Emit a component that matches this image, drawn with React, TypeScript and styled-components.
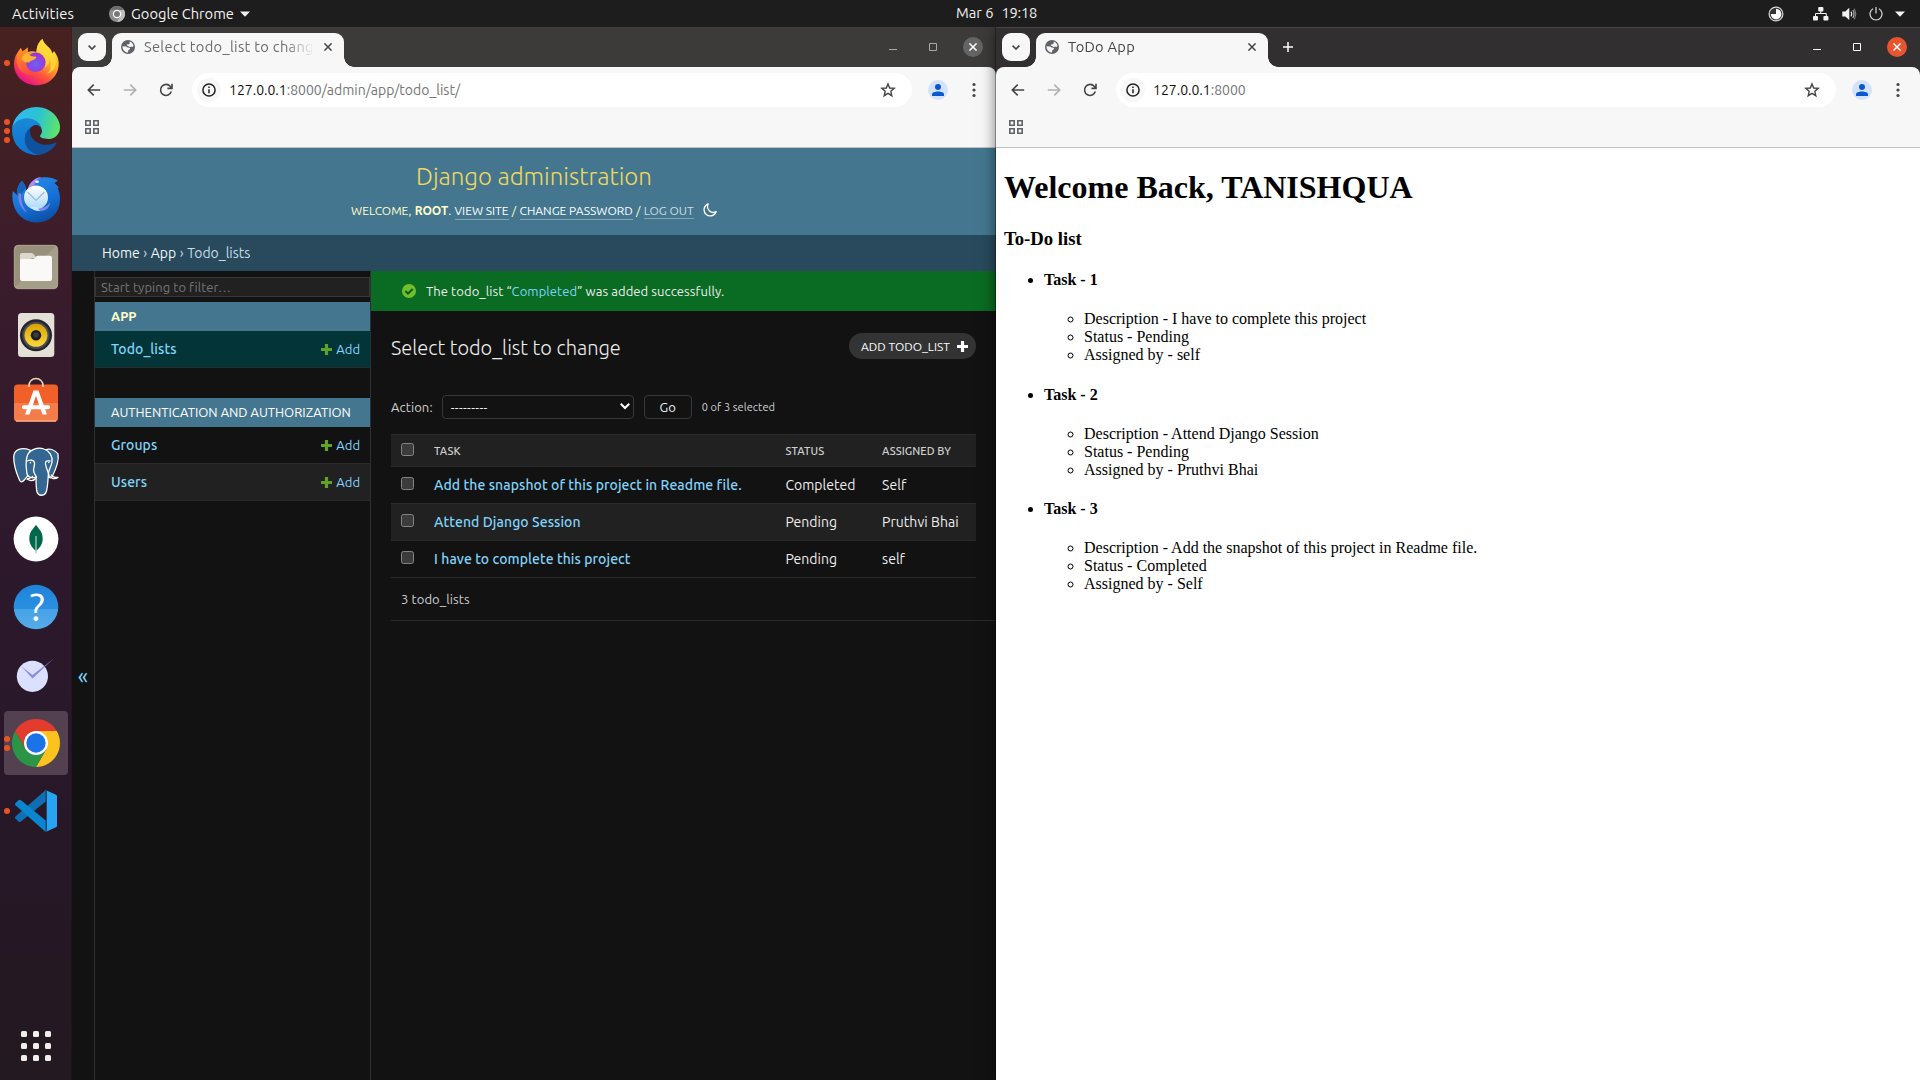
import React from 'react';
import styled, { createGlobalStyle, css } from 'styled-components';

const ui = '"Ubuntu", "Noto Sans", sans-serif';

const GlobalStyle = createGlobalStyle`
  *, *::before, *::after { box-sizing: border-box; }
  body { margin: 0; overflow: hidden; font-family: ${ui}; }
  svg { display: block; flex: none; }
`;

type Track = { $track?: number };
const tracking = css<Track>`
  letter-spacing: ${(p) => p.$track ?? 0}px;
  white-space: pre;
`;

/* ---------- desktop shell ---------- */

const Desktop = styled.div`
  display: grid;
  grid-template-rows: 27px 1053px;
  width: 1920px;
  height: 1080px;
  background: #121212;
`;

const TopBar = styled.header`
  display: grid;
  grid-template-columns: 956px 1fr auto;
  align-items: center;
  background: #1d1d1d;
  color: #f2f2f2;
  font-size: 14.67px;
  line-height: 26px;
`;

const TopLeft = styled.div`
  display: flex;
  align-items: center;
  padding-left: 12px;
`;

const TopText = styled.span<Track>`
  ${tracking}
`;

const AppMenu = styled.div`
  display: flex;
  align-items: center;
  gap: 6px;
  margin-left: 35px;
`;

const Clock = styled.div`
  display: flex;
  gap: 8px;
  padding-bottom: 1px;
`;

const Tray = styled.div`
  display: flex;
  align-items: center;
  justify-content: flex-end;
  padding-right: 15px;
`;

const TraySlot = styled.div<{ $gap: number }>`
  margin-left: ${(p) => p.$gap}px;
`;

const Workspace = styled.div`
  display: grid;
  grid-template-columns: 72px 924px 924px;
`;

const Dock = styled.nav`
  display: flex;
  flex-direction: column;
  align-items: center;
  gap: 4px;
  padding: 4px 0 3px;
  background: linear-gradient(180deg, #47211f 0%, #3a1c2c 24%, #2f192c 45%, #28172a 68%, #231920 100%);
  box-shadow: inset -1px 0 0 rgba(0, 0, 0, 0.12);
`;

const DockItem = styled.div<{ $active?: boolean }>`
  position: relative;
  display: flex;
  align-items: center;
  justify-content: center;
  width: 64px;
  height: 64px;
  border-radius: 4px;
  background: ${(p) => (p.$active ? '#53414f' : 'transparent')};
`;

const RunningDots = styled.div`
  position: absolute;
  left: 0;
  top: 0;
  bottom: 0;
  display: flex;
  flex-direction: column;
  justify-content: center;
  gap: 3px;
`;

const RunningDot = styled.i`
  width: 6px;
  height: 6px;
  border-radius: 50%;
  background: #e95420;
`;

const AppGridButton = styled.div`
  display: grid;
  grid-template-columns: repeat(3, 6px);
  gap: 6px;
  margin-top: auto;
  margin-bottom: 16px;
`;

const GridDot = styled.i`
  height: 6px;
  border-radius: 1.5px;
  background: #f0efeb;
`;

/* ---------- browser chrome ---------- */

const Window = styled.section<{ $front?: boolean }>`
  display: grid;
  grid-template-columns: 924px;
  grid-template-rows: 40px 46px 35px 932px;
  min-width: 0;
  background: ${(p) => (p.$front ? '#322f31' : '#3d3b39')};
  ${(p) =>
    p.$front &&
    css`
      z-index: 1;
      box-shadow: 0 0 0 1px rgba(0, 0, 0, 0.3), 0 2px 14px rgba(0, 0, 0, 0.55);
      clip-path: inset(0 0 0 -24px);
    `}
`;

const TabStrip = styled.div<{ $front?: boolean }>`
  display: flex;
  align-items: flex-start;
  padding: 6px 13px 0 6px;
  box-shadow: inset 0 1px 0 ${(p) => (p.$front ? '#474546' : '#403e3c')};
`;

const TabSearch = styled.div`
  display: flex;
  align-items: center;
  justify-content: center;
  width: 28px;
  height: 28px;
  border-radius: 9px;
  background: #f7f7f7;
`;

const Tab = styled.div`
  position: relative;
  display: flex;
  align-items: center;
  width: 232px;
  height: 34px;
  margin-left: 6px;
  padding: 0 12px 6px 9px;
  border-radius: 9px 9px 0 0;
  background: #f7f7f7;
  &::before,
  &::after {
    content: '';
    position: absolute;
    bottom: 0;
    width: 10px;
    height: 10px;
  }
  &::before {
    right: 100%;
    background: radial-gradient(circle at 0 0, transparent 9.5px, #f7f7f7 10px);
  }
  &::after {
    left: 100%;
    background: radial-gradient(circle at 100% 0, transparent 9.5px, #f7f7f7 10px);
  }
`;

const TabTitle = styled.span<Track & { $muted?: boolean }>`
  ${tracking}
  flex: none;
  width: 168px;
  margin: 0 12px 0 9px;
  overflow: hidden;
  font-size: 14.67px;
  line-height: 22px;
  color: ${(p) => (p.$muted ? '#6c6c6c' : '#454545')};
  mask-image: linear-gradient(90deg, #000 84%, transparent 101%);
`;

const NewTab = styled.div`
  margin: 9px 0 0 15px;
`;

const WindowControls = styled.div<{ $front?: boolean }>`
  display: flex;
  align-items: center;
  gap: 20px;
  height: 28px;
  margin-left: auto;
  color: ${(p) => (p.$front ? '#fff' : '#a9a8a7')};
`;

const CloseButton = styled.div<{ $front?: boolean }>`
  display: flex;
  align-items: center;
  justify-content: center;
  width: 20px;
  height: 20px;
  border-radius: 50%;
  background: ${(p) => (p.$front ? '#e95430' : '#656464')};
`;

const Toolbar = styled.div`
  display: flex;
  align-items: center;
  padding: 0 15px;
  border-radius: 8px 8px 0 0;
  background: #f7f7f7;
`;

const NavIcons = styled.div`
  display: flex;
  gap: 22px;
  margin-right: 19px;
`;

const Omnibox = styled.div`
  display: flex;
  align-items: center;
  flex: none;
  width: 720px;
  height: 34px;
  padding: 0 16px 0 5px;
  border-radius: 17px;
  background: #fff;
  font-size: 14px;
`;

const InfoBadge = styled.div`
  display: flex;
  align-items: center;
  justify-content: center;
  width: 24px;
  height: 24px;
  margin-right: 8px;
  border-radius: 50%;
  background: #f7f7f7;
`;

const Host = styled.span`
  color: #111;
`;

const Path = styled.span`
  flex: 1;
  color: #757575;
`;

const Profile = styled.div`
  display: flex;
  align-items: center;
  justify-content: center;
  width: 20px;
  height: 20px;
  margin: 0 24px 0 16px;
  border-radius: 50%;
  background: #d3e3fd;
`;

const BookmarkBar = styled.div`
  padding: 7px 13px 0;
  border-bottom: 1px solid #c2c2c2;
  background: #f7f7f7;
`;

/* ---------- django admin ---------- */

const AdminPage = styled.div`
  display: grid;
  grid-template-rows: 87px 36px 1fr;
  background: #121212;
  color: #eee;
`;

const AdminHeader = styled.header`
  display: flex;
  flex-direction: column;
  align-items: center;
  padding-top: 16px;
  background: #44778f;
  color: #ffffcc;
`;

const SiteName = styled.h1`
  margin: 0;
  color: #f0d95d;
  font-size: 24px;
  font-weight: 300;
  line-height: 26px;
`;

const UserTools = styled.div`
  display: flex;
  align-items: center;
  gap: 3.3px;
  margin-top: 10px;
  font-size: 12px;
  line-height: 15px;
  height: 20px;
  text-transform: uppercase;
  svg { margin-left: 6px; }
`;

const ToolLink = styled.a<{ $soft?: boolean }>`
  align-self: flex-start;
  margin-top: 2.5px;
  padding-bottom: ${(p) => (p.$soft ? 0 : 1)}px;
  border-bottom: 1px solid #83a5b5;
  color: ${(p) => (p.$soft ? '#cfdde4' : '#fff')};
`;

const Breadcrumbs = styled.div`
  display: flex;
  align-items: center;
  gap: 3.5px;
  padding: 0 30px 1px;
  background: #284a5c;
  color: #c4dce8;
  font-size: 14px;
`;

const Crumb = styled.span<{ $link?: boolean }>`
  color: ${(p) => (p.$link ? '#f4f4f4' : '#c4dce8')};
`;

const AdminBody = styled.div`
  display: grid;
  grid-template-columns: 23px 276px 625px;
`;

const NavToggle = styled.button`
  display: flex;
  align-items: center;
  justify-content: center;
  padding: 0;
  border: 0;
  border-right: 1px solid #2f2f2f;
  background: transparent;
  color: #81d4fa;
  font: 22px/1 ${ui};
`;

const AdminNav = styled.nav`
  padding-top: 6px;
  border-right: 1px solid #2f2f2f;
`;

const Filter = styled.input`
  display: block;
  width: 100%;
  height: 20px;
  margin: 0 0 5px;
  padding: 0 5px;
  border: 1px solid #383838;
  background: #212121;
  font: 13px ${ui};
  letter-spacing: 0.05px;
  &::placeholder { color: #757575; opacity: 1; }
`;

const Module = styled.section`
  margin-bottom: 30px;
`;

const ModuleTitle = styled.h2<{ $current?: boolean }>`
  margin: 0;
  padding-left: 16px;
  background: #44778f;
  color: ${(p) => (p.$current ? '#ffffcc' : '#fff')};
  font-size: 13px;
  font-weight: ${(p) => (p.$current ? 700 : 400)};
  line-height: 29px;
  text-transform: uppercase;
`;

const ModelRow = styled.div<{ $tone?: 'current' | 'alt' }>`
  display: flex;
  align-items: center;
  height: 37px;
  padding: 0 10px 0 16px;
  border-bottom: 1px solid #2b2b2b;
  background: ${(p) => (p.$tone === 'current' ? '#033538' : p.$tone === 'alt' ? '#212121' : 'transparent')};
  color: #81d4fa;
`;

const ModelName = styled.a`
  flex: 1;
  font-size: 14px;
  font-weight: 500;
  letter-spacing: 0.07px;
`;

const AddLink = styled.a`
  display: flex;
  align-items: center;
  gap: 4px;
  font-size: 13px;
`;

const Main = styled.main`
  display: flex;
  flex-direction: column;
`;

const Message = styled.div`
  display: flex;
  align-items: center;
  gap: 10px;
  height: 40px;
  padding-left: 31px;
  background: #0a6b22;
  font-size: 13px;
  letter-spacing: 0.08px;
`;

const MessageLink = styled.a`
  color: #81d4fa;
`;

const Content = styled.div`
  padding: 20px 0 0 20px;
`;

const TitleRow = styled.div`
  display: flex;
  justify-content: space-between;
  height: 34px;
  margin-right: 20px;
`;

const PageTitle = styled.h2`
  margin: 0;
  font-size: 20px;
  font-weight: 300;
  line-height: 34px;
`;

const AddButton = styled.a`
  display: flex;
  align-items: center;
  gap: 7px;
  height: 26px;
  margin-top: 2px;
  padding: 0 8px 0 12px;
  border-radius: 13px;
  background: #333;
  color: #fff;
  font-size: 12px;
`;

const Actions = styled.div`
  display: flex;
  align-items: center;
  height: 24px;
  margin: 30px 0 15px;
  font-size: 13px;
  color: #d0d0d0;
  letter-spacing: 0.1px;
`;

const Select = styled.div`
  display: flex;
  align-items: center;
  justify-content: space-between;
  width: 192px;
  height: 24px;
  margin: 0 10px 0 9px;
  padding: 0 3px 1px 8px;
  border: 1px solid #383838;
  border-radius: 4px;
  color: #eee;
  letter-spacing: 0.35px;
`;

const GoButton = styled.button`
  width: 48px;
  height: 24px;
  margin-right: 10px;
  padding: 0;
  border: 1px solid #383838;
  border-radius: 4px;
  background: transparent;
  color: #eee;
  font: 13px ${ui};
`;

const Counter = styled.span`
  font-size: 11px;
  letter-spacing: 0.07px;
`;

const gridRow = css`
  display: grid;
  grid-template-columns: 43px 351.5px 96.5px 1fr;
  margin-right: 20px;
  border-bottom: 1px solid #2b2b2b;
`;

const HeadRow = styled.div`
  ${gridRow}
  height: 33px;
  border-top: 1px solid #2b2b2b;
  background: #212121;
  color: #d0d0d0;
  font-size: 11px;
  font-weight: 500;
  line-height: 32px;
`;

const BodyRow = styled.div<{ $alt?: boolean }>`
  ${gridRow}
  height: 37px;
  background: ${(p) => (p.$alt ? '#212121' : 'transparent')};
  font-size: 14px;
  line-height: 37px;
`;

const Cell = styled.span<Track>`
  ${tracking}
`;

const TaskLink = styled.a`
  color: #81d4fa;
  font-weight: 500;
  letter-spacing: 0.07px;
`;

const Checkbox = styled.i<{ $top: number }>`
  width: 13px;
  height: 13px;
  margin: ${(p) => p.$top}px 0 0 10px;
  border: 1px solid #858585;
  border-radius: 2.5px;
  background: #3b3b3b;
`;

const Paginator = styled.div`
  height: 43px;
  padding-left: 10px;
  border-bottom: 1px solid #2b2b2b;
  color: #d0d0d0;
  font-size: 13px;
  line-height: 43px;
  letter-spacing: 0.1px;
`;

/* ---------- todo page ---------- */

const TodoPage = styled.div`
  display: flow-root;
  padding: 0 8px;
  background: #fff;
  color: #000;
  font: 16px "Liberation Serif", "Times New Roman", serif;
`;

/* ---------- icons ---------- */

const Caret = () => (
  <svg width="10" height="6" viewBox="0 0 10 6"><path d="M0 .5h10L5 5.7z" fill="#f2f2f2" /></svg>
);

const GreyChrome = () => (
  <svg width="16" height="16" viewBox="0 0 16 16">
    <circle cx="8" cy="8" r="8" fill="#8c8c8c" />
    <path d="M1 4A8 8 0 0 1 15 4H8z" fill="#6d6d6d" />
    <path d="M15 4A8 8 0 0 1 8 16l3.5-6L11 4z" fill="#bdbdbd" />
    <circle cx="8" cy="8" r="3.6" fill="#777" stroke="#fff" strokeWidth="1.3" />
  </svg>
);

const IndicatorIcon = () => (
  <svg width="16" height="16" viewBox="0 0 16 16">
    <circle cx="8" cy="8" r="6.9" fill="#333" stroke="#d8d8d8" strokeWidth="1.2" />
    <path d="M8 8V2.8A5.3 5.3 0 1 1 2.8 8z" fill="#fff" />
  </svg>
);

const NetworkIcon = () => (
  <svg width="16" height="14" viewBox="0 0 16 14" fill="#f2f2f2">
    <rect x="5.2" y="0" width="5.2" height="4.4" rx="1" /><rect x="0" y="9" width="5" height="4.4" rx="1" />
    <rect x="10.4" y="9" width="5" height="4.4" rx="1" />
    <path d="M2.5 9.5v-3h10.8v3M7.8 4v2.5" fill="none" stroke="#f2f2f2" />
  </svg>
);

const VolumeIcon = () => (
  <svg width="15" height="14" viewBox="0 0 15 14">
    <path d="M.3 4.5h3L7.3.7v12.4L3.3 9.5h-3z" fill="#f2f2f2" />
    <path d="M9 4.6q1.6 2.4 0 4.8" fill="none" stroke="#f2f2f2" strokeWidth="1.2" />
    <path d="M10.8 3q2.5 4 0 8" fill="none" stroke="#c0c0c0" strokeWidth="1.1" />
    <path d="M12.4 1.6q3 5.4 0 10.8" fill="none" stroke="#8a8a8a" />
  </svg>
);

const PowerIcon = () => (
  <svg width="14" height="14" viewBox="0 0 14 14" fill="none" stroke="#dcdcdc" strokeWidth="1.2">
    <path d="M4 1.8a6 6 0 1 0 6 0M7 0v6.5" />
  </svg>
);

const Chevron = ({ color = '#444', w = 8 }: { color?: string; w?: number }) => (
  <svg width={w} height={w * 0.625} viewBox="0 0 8 5" fill="none" stroke={color} strokeWidth="1.6"><path d="M.6.6 4 4 7.4.6" /></svg>
);

const Globe = () => (
  <svg width="14" height="14" viewBox="0 0 14 14">
    <circle cx="7" cy="7" r="7" fill="#5f6368" />
    <path d="M8.9 1.5c1.9.7 3.4 2.5 3.6 4.5l-1.2.9c-.8-.1-1.2-.6-1.6-.2-.6.6-1.8.2-2.2-.4L6 5.6c-.6-.6 0-1.4.8-1.4h1.3c.8-.2.2-1.4.8-2.7M1.5 6.2 5 6.4c1 .2 1.2 1 1.9 1.2l1.6.1c.8.4.7 1.5-.1 1.8l-1 .4-.4 2.6c-3 0-5.4-2.4-5.5-6.3" fill="#f7f7f7" />
  </svg>
);

const Cross = ({ size, color, width = 1.5 }: { size: number; color: string; width?: number }) => (
  <svg width={size} height={size} viewBox="0 0 8 8" stroke={color} strokeWidth={width}><path d="M.4.4l7.2 7.2M7.6.4.4 7.6" /></svg>
);

const Arrow = ({ color, flip }: { color: string; flip?: boolean }) => (
  <svg width="14" height="14" viewBox="0 0 14 14" fill="none" stroke={color} strokeWidth="1.6">
    <path d={flip ? 'M.8 7h11.4M7.3 1.6 12.7 7l-5.4 5.4' : 'M13.2 7H1.8M6.7 1.6 1.3 7l5.4 5.4'} />
  </svg>
);

const Reload = () => (
  <svg width="14" height="14" viewBox="0 0 14 14" fill="none" stroke="#444" strokeWidth="1.6">
    <path d="M12.3 8.6A5.5 5.5 0 1 1 11.2 3.3L12.8 5M13 .8v4.6H8.4" />
  </svg>
);

const Info = () => (
  <svg width="14" height="14" viewBox="0 0 14 14">
    <circle cx="7" cy="7" r="6.1" fill="none" stroke="#222" strokeWidth="1.5" />
    <path d="M7 6.2v4.1M7 3.5v1.5" stroke="#222" strokeWidth="1.5" />
  </svg>
);

const Star = () => (
  <svg width="16" height="16" viewBox="0 0 16 16" fill="none" stroke="#444" strokeWidth="1.4">
    <path d="m8 1.9 1.7 4.1 4.5.4-3.4 2.9 1 4.4L8 11.4l-3.8 2.3 1-4.4L1.8 6.4l4.5-.4z" />
  </svg>
);

const Person = () => (
  <svg width="12" height="12" viewBox="0 0 12 12" fill="#0b57d0"><circle cx="6" cy="3" r="3" /><path d="M0 12v-1.5C0 8.5 3 7.6 6 7.6s6 .9 6 2.9V12z" /></svg>
);

const Kebab = () => (
  <svg width="4" height="16" viewBox="0 0 4 16" fill="#444"><circle cx="2" cy="2.5" r="1.6" /><circle cx="2" cy="8" r="1.6" /><circle cx="2" cy="13.5" r="1.6" /></svg>
);

const AppsGrid = () => (
  <svg width="14" height="14" viewBox="0 0 14 14" fill="none" stroke="#5f6368" strokeWidth="1.6">
    <path d="M.8.8h4.4v4.4H.8zM8.8.8h4.4v4.4H8.8zM.8 8.8h4.4v4.4H.8zM8.8 8.8h4.4v4.4H8.8z" />
  </svg>
);

const Moon = () => (
  <svg width="14" height="14" viewBox="0 0 14 14" fill="none" stroke="#fff" strokeWidth="1.3">
    <path d="M5.2.9A6.2 6.2 0 1 0 13.2 8.6 5.8 5.8 0 0 1 5.2.9z" strokeLinejoin="round" />
  </svg>
);

const Plus = ({ color, size = 11 }: { color: string; size?: number }) => (
  <svg width={size} height={size} viewBox="0 0 11 11" fill={color}><path d="M3.9 0h3.2v3.9H11v3.2H7.1V11H3.9V7.1H0V3.9h3.9z" /></svg>
);

const Tick = () => (
  <svg width="14" height="14" viewBox="0 0 14 14"><circle cx="7" cy="7" r="7" fill="#70bf2b" /><path d="m3.3 7 2.7 2.7L10.7 5" fill="none" stroke="#0a5a20" strokeWidth="2" /></svg>
);

const ArtFrame = styled.svg`
  width: 48px;
  height: 48px;
  overflow: visible;
`;

const Art = ({ box = 48, children, ...rest }: { box?: number } & React.SVGProps<SVGSVGElement>) => (
  <ArtFrame viewBox={`0 0 ${box} ${box}`} {...(rest as object)}>{children}</ArtFrame>
);

const Firefox = () => (
  <Art>
    <defs>
      <linearGradient id="ffBody" x1=".8" y1=".1" x2=".25" y2=".95">
        <stop offset="0" stopColor="#ffe83c" /><stop offset=".38" stopColor="#ffa72b" /><stop offset=".68" stopColor="#ff5239" /><stop offset="1" stopColor="#e6128a" />
      </linearGradient>
      <radialGradient id="ffGlobe" cx=".5" cy=".6" r=".6"><stop offset="0" stopColor="#6d62f5" /><stop offset="1" stopColor="#a02fd6" /></radialGradient>
      <linearGradient id="ffFace" x1="0" y1="0" x2=".5" y2="1"><stop offset="0" stopColor="#ff9a1c" /><stop offset=".5" stopColor="#ff7a2c" /><stop offset="1" stopColor="#ff4a45" /></linearGradient>
    </defs>
    <path d="M30.5 0c1 4 4 6 6.5 8.5 2 2 3 4 3.5 6l1.5-2.5c3 4 4.7 8 4.7 12.5C46.7 37 37 46.3 24.5 46.3S2 37 2 25c0-4.5 1.3-8.500 3.500-11.500L8.800 9l1.700 3.500 5.500-4-.3 4.500C18 12.300 22 12 24.500 13c0-5 2-10.500 6-13z" fill="url(#ffBody)" />
    <path d="M24.5 13c5 .5 9.5 5 9.5 10 0 2-.5 4-1.5 5.500 3-1 6-5 4-9.500 3.500 5 3 12-1.500 16 6-2 9-7 9-12 0-7-5.500-10.500-10-16C32 4 31 2 30.500 0c-4 2.500-6 8-6 13z" fill="#ffdc3a" opacity=".75" />
    <path d="M8.8 9l1.7 3.5 5.5-4-.3 4.5L17 30c1.500 3 4 4.500 8 4.500-8 4-18 0-20-10-1-6 .5-11 3.800-15.500z" fill="url(#ffFace)" opacity=".8" />
    <circle cx="23.7" cy="23.3" r="9.7" fill="url(#ffGlobe)" />
    <path d="M15.500 13c1.500 3.500 4 4.800 7.500 4.500 1 0 1.500.7 1 1.500-2 2.500-5 2-7 4.500-2 .5-6-.5-7.500-3.500 1-3 3-5.500 6-7z" fill="#ffb22e" />
  </Art>
);

const Edge = () => (
  <Art box={256}>
    <defs>
      <linearGradient id="edTop" x1="0" y1=".4" x2="1" y2=".6"><stop offset="0" stopColor="#35b8f1" /><stop offset=".5" stopColor="#2bc3d2" /><stop offset="1" stopColor="#5fe665" /></linearGradient>
      <linearGradient id="edLeft" x1=".4" y1="0" x2=".4" y2="1"><stop offset="0" stopColor="#1b8ad8" /><stop offset="1" stopColor="#0d74d1" /></linearGradient>
    </defs>
    <g transform="translate(-4.6 -4.9)">
      <path d="M235.68 195.46a93.73 93.73 0 0 1-10.54 4.71 101.87 101.87 0 0 1-35.9 6.46c-47.32 0-88.54-32.55-88.54-74.32A31.48 31.48 0 0 1 117.13 105c-42.8 1.8-53.8 46.4-53.8 72.53 0 73.88 68.09 81.37 82.76 81.37 7.91 0 19.84-2.3 27-4.56l1.31-.44a128.34 128.34 0 0 0 66.6-52.8 4 4 0 0 0-5.32-5.64z" fill="#0f519c" />
      <path d="M110.34 246.34A79.2 79.2 0 0 1 87.6 225a80.72 80.72 0 0 1 29.53-120c3.12-1.47 8.45-4.13 15.54-4a32.35 32.35 0 0 1 25.69 13 31.88 31.88 0 0 1 6.36 18.66c0-.21 24.46-79.6-80-79.6-43.9 0-80 41.66-80 78.21a130.15 130.15 0 0 0 12.11 56 128 128 0 0 0 156.38 67.11 75.55 75.55 0 0 1-62.78-8z" fill="url(#edLeft)" />
    </g>
    <path d="M152.33 148.86c-.81 1.05-3.3 2.5-3.3 5.66 0 2.61 1.7 5.12 4.72 7.23 14.38 10 41.49 8.68 41.56 8.68a59.56 59.56 0 0 0 30.27-8.35 61.38 61.38 0 0 0 30.43-52.88c.26-22.41-8-37.31-11.34-43.91C223.45 23.61 177.72 0 128 0A128 128 0 0 0 0 126.2c.48-36.54 36.8-66.05 80-66.05 3.5 0 23.46.34 42 10.07 16.34 8.58 24.9 18.94 30.85 29.21 6.18 10.67 7.28 24.15 7.28 29.52s-2.74 13.33-7.8 19.91z" fill="url(#edTop)" />
  </Art>
);

const Thunderbird = () => (
  <Art>
    <defs>
      <linearGradient id="tb" x1=".2" y1="0" x2=".6" y2="1"><stop offset="0" stopColor="#2a8be8" /><stop offset=".6" stopColor="#1470d6" /><stop offset="1" stopColor="#0c4fa5" /></linearGradient>
      <linearGradient id="tbMail" x1="0" y1="0" x2="0" y2="1"><stop offset="0" stopColor="#fff" /><stop offset="1" stopColor="#a9d9fb" /></linearGradient>
    </defs>
    <path d="M10 6C6.5 9 4.5 14 5 20L.8 16C-2 33 9 47.5 24 47.5S48 37 48 24c0-4-.7-8-2.5-11l1.5-.5-4.5-4.5 3.5-2.5C40 2 31 1 25 4c-4 2-7 5.5-9 9l-2 5C15 12 12.5 9 10 6z" fill="url(#tb)" />
    <path d="M16 13c2-6 7-10.5 14-11-5 2-7 5-7.5 8z" fill="#b48bf2" />
    <path d="M10 6C6.5 9 4.5 14 5 20l4 7c0-6 1-10 5-14-1-3-2.5-5.5-4-7z" fill="#1364bd" />
    <path d="M6.5 18c-1 8 2 16 9 20-5-6-7-12-6-19z" fill="#7f83e8" />
    <circle cx="24" cy="22.5" r="12" fill="url(#tbMail)" />
    <path d="M18 32c2 2.5 6 4.5 11 4-2-1-3-2-3-4z" fill="#c9e7fd" />
    <path d="m15.5 17 8.5 8.5L32.5 17" fill="none" stroke="#9fb9d6" strokeWidth="1.2" />
    <path d="M26 34c6-1 10-3 12-7 0 5-4 9-9 9z" fill="#8288ea" />
    <ellipse cx="25" cy="6.8" rx="2" ry="1.2" fill="#dff1ff" />
  </Art>
);

const Files = () => (
  <Art>
    <defs><linearGradient id="fl" x1="0" y1="0" x2="1" y2="1"><stop offset=".48" stopColor="#98907b" /><stop offset=".5" stopColor="#a59e89" /></linearGradient></defs>
    <rect x="2.3" y="2.3" width="43.4" height="43.4" rx="4" fill="url(#fl)" stroke="#bdb7a4" strokeWidth=".8" />
    <path d="M8 12q0-2 2-2h9.5q1.5 0 2.5 1.5l2 3L8 18z" fill="#dcd8cc" />
    <path d="M8 17.5q0-1.5 1.5-1.5h11q1 0 2-1l1.5-1.500q.7-.7 2-.7H38q2 0 2 2V36q0 2-2 2H10q-2 0-2-2z" fill="#faf9f7" />
  </Art>
);

const Rhythmbox = () => (
  <Art>
    <defs><linearGradient id="rb" x1="0" y1="0" x2="0" y2="1"><stop offset="0" stopColor="#d9a400" /><stop offset="1" stopColor="#fbd83e" /></linearGradient></defs>
    <rect x="6" y="2" width="36.3" height="44" rx="3.5" fill="#e3e0d5" />
    <circle cx="24" cy="24.3" r="16" fill="#25242c" />
    <circle cx="24" cy="24.3" r="13.6" fill="#484a55" />
    <circle cx="24" cy="24.3" r="11.5" fill="url(#rb)" />
    <circle cx="24" cy="24.3" r="5.2" fill="#1d1d1d" />
    <circle cx="24" cy="24" r="2.8" fill="#3b3b3b" />
  </Art>
);

const Software = () => (
  <Art>
    <defs><linearGradient id="sw" x1="0" y1="0" x2="0" y2="1"><stop offset=".5" stopColor="#f2602a" /><stop offset=".5" stopColor="#f47b4a" /></linearGradient></defs>
    <rect x="2" y="5.5" width="44" height="37" rx="3.5" fill="url(#sw)" />
    <path d="M4 42h40" stroke="#f9a882" strokeWidth="1.4" />
    <path d="M17 8V6.5a7 7 0 0 1 14 0V8" fill="none" stroke="#ecd9b0" strokeWidth="1.5" />
    <path d="M21.5 11.5h5L35 35.5h-4.5L24 17l-6.5 18.5H13z" fill="#fff" />
    <rect x="10" y="26.3" width="28" height="4" rx="2" fill="#fff" />
  </Art>
);

const Postgres = () => (
  <Art fill="#336791" stroke="#fff" strokeWidth="1.3" strokeLinejoin="round" strokeLinecap="round">
    <path d="M33 3c5-2 10 0 13 4 1 5-2 15-6 23-2 2-4 0-5-2z" />
    <path d="M18 3C10 0 2 2 1.7 10c0 7 3 17 6 23.5 1.5 2.5 3.5 1 5-1l5-6z" />
    <path d="M16 7c3-5 10-7 16-5 5 1.5 9 7 8 13-.5 4-3 7-3.5 11-.5 5-.5 12-2 18-1.5 5.5-8 5.5-9.5 1-1-4-1-10-1-15-4 2-8 0-9-3-.5-5-2.5-13 1-20z" />
    <path d="M15 14c3-1.5 7-1 7.5 1.5.5 4-2 5.5-.5 10 .7 2 2 3 2.5 5-3 4-6 4-9.5 1.5 3-1 5-1 5.5-2.5M38 14c-3-.5-5 0-4.5 3 .5 4 2.5 7 3.5 11.5 2 3.5 6 4 9 2-4 0-6-1-6.5-2.5" fill="none" />
    <circle cx="18.5" cy="15.8" r=".8" fill="#fff" stroke="none" /><circle cx="36.8" cy="15.5" r=".7" fill="#fff" stroke="none" />
  </Art>
);

const Mongo = () => (
  <Art>
    <circle cx="24" cy="24" r="22.4" fill="#fff" />
    <path d="M24 9.5c1 3 6.7 6 6.7 14 0 7-4 10-6.7 12.5-2.7-2.5-6.7-5.5-6.7-12.5 0-8 5.7-11 6.7-14z" fill="#00684a" />
    <path d="M24 21v17.5" stroke="#a9c9bc" strokeWidth="1.3" />
  </Art>
);

const HelpMark = styled.text`
  fill: #fff;
  font: 400 39px ${ui};
  text-anchor: middle;
`;

const Help = () => (
  <Art>
    <defs><linearGradient id="hp" x1="0" y1="0" x2="0" y2="1"><stop offset="0" stopColor="#1c84da" /><stop offset=".54" stopColor="#2b8fdf" /><stop offset=".54" stopColor="#45a2e6" /><stop offset="1" stopColor="#55ace9" /></linearGradient></defs>
    <circle cx="24" cy="24" r="22.3" fill="url(#hp)" />
    <HelpMark x="25" y="37.5">?</HelpMark>
  </Art>
);

const TodoClock = () => (
  <Art>
    <circle cx="20.4" cy="25.3" r="15.6" fill="#dce0ff" />
    <path d="M9.5 15.5 20.5 24 42.5 7 20.5 27.5z" fill="#6f7bdc" opacity=".8" />
  </Art>
);

const Chrome = () => (
  <Art>
    <path d="M24 24 3.22 12A24 24 0 0 1 44.78 12z" fill="#e33b2e" />
    <path d="M24 24V12h20.78A24 24 0 0 1 24 48l10.4-18z" fill="#fcc31e" />
    <path d="M24 24l10.4 6L24 48A24 24 0 0 1 3.22 12l10.4 18z" fill="#2a9547" />
    <path d="M3.22 12 13.6 30 24 24V12z" fill="#e33b2e" />
    <circle cx="24" cy="24" r="12" fill="#fff" />
    <circle cx="24" cy="24" r="9.7" fill="#1a73e8" />
  </Art>
);

const VsCode = () => (
  <Art>
    <path d="M33.7 3v11.5L9 34.5q-1.3 1-2.5 0l-3-2.7q-1.2-1.2 0-2.3z" fill="#0f6fb3" />
    <path d="M33.7 45V33.5L9 13.3q-1.3-1-2.5 0l-3 2.7q-1.2 1.2 0 2.3z" fill="#0a86d1" />
    <path d="M33.5 3 44 7.7q1 .5 1 1.6v29.4q0 1.1-1 1.6L33.5 45q1.2-.4 1.2-2V5q0-1.6-1.2-2z" fill="#27a5f2" />
  </Art>
);

/* ---------- composition ---------- */

const dockApps: { icon: React.FC; dots: number; active?: boolean }[] = [
  { icon: Firefox, dots: 1 },
  { icon: Edge, dots: 3 },
  { icon: Thunderbird, dots: 0 },
  { icon: Files, dots: 0 },
  { icon: Rhythmbox, dots: 0 },
  { icon: Software, dots: 0 },
  { icon: Postgres, dots: 0 },
  { icon: Mongo, dots: 0 },
  { icon: Help, dots: 0 },
  { icon: TodoClock, dots: 0 },
  { icon: Chrome, dots: 2, active: true },
  { icon: VsCode, dots: 1 },
];

type BrowserProps = { title: string; track: number; path: string; front?: boolean; children: React.ReactNode };

const Browser = ({ title, track, path, front, children }: BrowserProps) => (
  <Window $front={front}>
    <TabStrip $front={front}>
      <TabSearch><Chevron /></TabSearch>
      <Tab>
        <Globe />
        <TabTitle $track={track} $muted={!front}>{title}</TabTitle>
        <Cross size={8} color="#444" />
      </Tab>
      {front && (
        <NewTab><svg width="10" height="10" viewBox="0 0 10 10" stroke="#fff" strokeWidth="1.5"><path d="M5 0v10M0 5h10" /></svg></NewTab>
      )}
      <WindowControls $front={front}>
        <svg width="20" height="20" viewBox="0 0 20 20" stroke="currentColor"><path d="M6 12.5h8" /></svg>
        <svg width="20" height="20" viewBox="0 0 20 20" fill="none" stroke="currentColor"><path d="M6.5 6.5h7v7h-7z" /></svg>
        <CloseButton $front={front}><Cross size={8} color="#fff" /></CloseButton>
      </WindowControls>
    </TabStrip>
    <Toolbar>
      <NavIcons>
        <Arrow color="#444" />
        <Arrow color="#b0b0b0" flip />
        <Reload />
      </NavIcons>
      <Omnibox>
        <InfoBadge><Info /></InfoBadge>
        <Host>127.0.0.1</Host>
        <Path>{path}</Path>
        <Star />
      </Omnibox>
      <Profile><Person /></Profile>
      <Kebab />
    </Toolbar>
    <BookmarkBar><AppsGrid /></BookmarkBar>
    {children}
  </Window>
);

const AddItem = () => <AddLink><Plus color="#5fa225" /> Add</AddLink>;

const adminRows = [
  { task: 'Add the snapshot of this project in Readme file.', status: 'Completed', by: 'Self' },
  { task: 'Attend Django Session', status: 'Pending', by: 'Pruthvi Bhai' },
  { task: 'I have to complete this project', status: 'Pending', by: 'self' },
];

const tasks = [
  { description: 'I have to complete this project', status: 'Pending', by: 'self' },
  { description: 'Attend Django Session', status: 'Pending', by: 'Pruthvi Bhai' },
  { description: 'Add the snapshot of this project in Readme file.', status: 'Completed', by: 'Self' },
];

export default function App() {
  return (
    <Desktop>
      <GlobalStyle />
      <TopBar>
        <TopLeft>
          <TopText $track={0.2}>Activities</TopText>
          <AppMenu>
            <GreyChrome />
            <TopText>Google Chrome</TopText>
            <Caret />
          </AppMenu>
        </TopLeft>
        <Clock><TopText>Mar 6</TopText><TopText $track={-0.2}>19:18</TopText></Clock>
        <Tray>
          <TraySlot $gap={0}><IndicatorIcon /></TraySlot>
          <TraySlot $gap={29}><NetworkIcon /></TraySlot>
          <TraySlot $gap={13}><VolumeIcon /></TraySlot>
          <TraySlot $gap={12}><PowerIcon /></TraySlot>
          <TraySlot $gap={12}><Caret /></TraySlot>
        </Tray>
      </TopBar>
      <Workspace>
        <Dock>
          {dockApps.map(({ icon: Icon, dots, active }, i) => (
            <DockItem key={i} $active={active}>
              <RunningDots>{Array.from({ length: dots }, (_, d) => <RunningDot key={d} />)}</RunningDots>
              <Icon />
            </DockItem>
          ))}
          <AppGridButton>{Array.from({ length: 9 }, (_, d) => <GridDot key={d} />)}</AppGridButton>
        </Dock>

        <Browser title="Select todo_list to change" track={0.3} path=":8000/admin/app/todo_list/">
          <AdminPage>
            <AdminHeader>
              <SiteName>Django administration</SiteName>
              <UserTools>
                <span>Welcome,</span>
                <span><strong>root</strong>.</span>
                <ToolLink>View site</ToolLink>
                <span>/</span>
                <ToolLink>Change password</ToolLink>
                <span>/</span>
                <ToolLink $soft>Log out</ToolLink>
                <Moon />
              </UserTools>
            </AdminHeader>
            <Breadcrumbs>
              <Crumb $link>Home</Crumb>›<Crumb $link>App</Crumb>›<Crumb>Todo_lists</Crumb>
            </Breadcrumbs>
            <AdminBody>
              <NavToggle>«</NavToggle>
              <AdminNav>
                <Filter placeholder="Start typing to filter…" />
                <Module>
                  <ModuleTitle $current>App</ModuleTitle>
                  <ModelRow $tone="current"><ModelName>Todo_lists</ModelName><AddItem /></ModelRow>
                </Module>
                <Module>
                  <ModuleTitle>Authentication and Authorization</ModuleTitle>
                  <ModelRow><ModelName>Groups</ModelName><AddItem /></ModelRow>
                  <ModelRow $tone="alt"><ModelName>Users</ModelName><AddItem /></ModelRow>
                </Module>
              </AdminNav>
              <Main>
                <Message>
                  <Tick />
                  <span>The todo_list “<MessageLink>Completed</MessageLink>” was added successfully.</span>
                </Message>
                <Content>
                  <TitleRow>
                    <PageTitle>Select todo_list to change</PageTitle>
                    <AddButton>ADD TODO_LIST <Plus color="#fff" /></AddButton>
                  </TitleRow>
                  <Actions>
                    Action:
                    <Select>---------<Chevron color="#fff" w={10} /></Select>
                    <GoButton>Go</GoButton>
                    <Counter>0 of 3 selected</Counter>
                  </Actions>
                  <HeadRow>
                    <Checkbox $top={8} />
                    <Cell $track={0.1}>TASK</Cell>
                    <Cell $track={0.1}>STATUS</Cell>
                    <Cell $track={0.05}>ASSIGNED BY</Cell>
                  </HeadRow>
                  {adminRows.map((r, i) => (
                    <BodyRow key={r.task} $alt={i === 1}>
                      <Checkbox $top={10} />
                      <TaskLink>{r.task}</TaskLink>
                      <Cell>{r.status}</Cell>
                      <Cell $track={0.05}>{r.by}</Cell>
                    </BodyRow>
                  ))}
                  <Paginator>3 todo_lists</Paginator>
                </Content>
              </Main>
            </AdminBody>
          </AdminPage>
        </Browser>

        <Browser title="ToDo App" track={0.25} path=":8000" front>
          <TodoPage>
            <h1>Welcome Back, TANISHQUA</h1>
            <h3>To-Do list</h3>
            <ul>
              {tasks.map((t, i) => (
                <li key={t.description}>
                  <h4>Task - {i + 1}</h4>
                  <ul>
                    <li>Description - {t.description}</li>
                    <li>Status - {t.status}</li>
                    <li>Assigned by - {t.by}</li>
                  </ul>
                </li>
              ))}
            </ul>
          </TodoPage>
        </Browser>
      </Workspace>
    </Desktop>
  );
}
